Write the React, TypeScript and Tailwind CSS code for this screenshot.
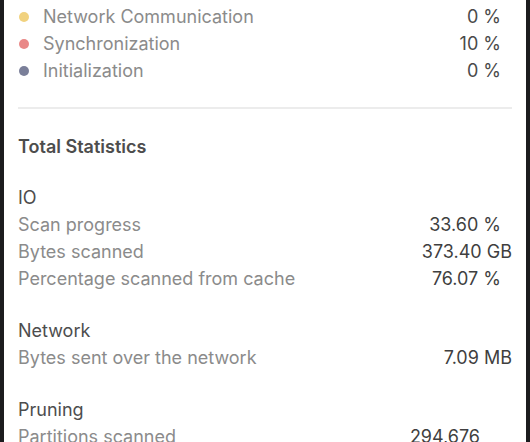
const phases = [
  { name: "Network Communication", value: "0 %", dot: "bg-[#f1d27f]" },
  { name: "Synchronization", value: "10 %", dot: "bg-[#e98887]" },
  { name: "Initialization", value: "0 %", dot: "bg-[#7a7f99]" },
]

type Stat = { label: string; value: string; pad: string }

const groups: { title: string; rows: Stat[] }[] = [
  {
    title: "IO",
    rows: [
      { label: "Scan progress", value: "33.60 %", pad: "pr-[11px]" },
      { label: "Bytes scanned", value: "373.40 GB", pad: "pr-0" },
      { label: "Percentage scanned from cache", value: "76.07 %", pad: "pr-[11px]" },
    ],
  },
  {
    title: "Network",
    rows: [{ label: "Bytes sent over the network", value: "7.09 MB", pad: "pr-0" }],
  },
  {
    title: "Pruning",
    rows: [{ label: "Partitions scanned", value: "294,676", pad: "pr-[32px]" }],
  },
]

export default function App() {
  return (
    <div className="flex h-[442px] w-[530px] overflow-hidden bg-[#1c1c1e] px-1 font-['Inter',sans-serif] text-[18px] leading-[27px]">
      <div className="flex-1 bg-white px-[14px] pt-[3px]">
        <div className="flex flex-col">
          {phases.map((p) => (
            <div key={p.name} className="flex items-center justify-between">
              <div className="flex items-center gap-[14px] pl-[1px]">
                <span className={`size-[10px] rounded-full ${p.dot}`} />
                <span className="text-[#8b8b8b]">{p.name}</span>
              </div>
              <span className="pr-[11px] text-[#4a4a4a]">{p.value}</span>
            </div>
          ))}
        </div>
        <div className="mt-[23px] h-[2px] bg-[#ececec]" />
        <div className="mt-[24px] font-semibold text-[#4d4d4d]">Total Statistics</div>
        <div className="mt-[24px] flex flex-col gap-[25px]">
          {groups.map((g) => (
            <div key={g.title} className="flex flex-col">
              <div className="text-[#4d4d4d]">{g.title}</div>
              {g.rows.map((r) => (
                <div key={r.label} className="flex justify-between">
                  <span className="text-[#8b8b8b]">{r.label}</span>
                  <span className={`text-[#3f3f3f] ${r.pad}`}>{r.value}</span>
                </div>
              ))}
            </div>
          ))}
        </div>
      </div>
    </div>
  )
}
